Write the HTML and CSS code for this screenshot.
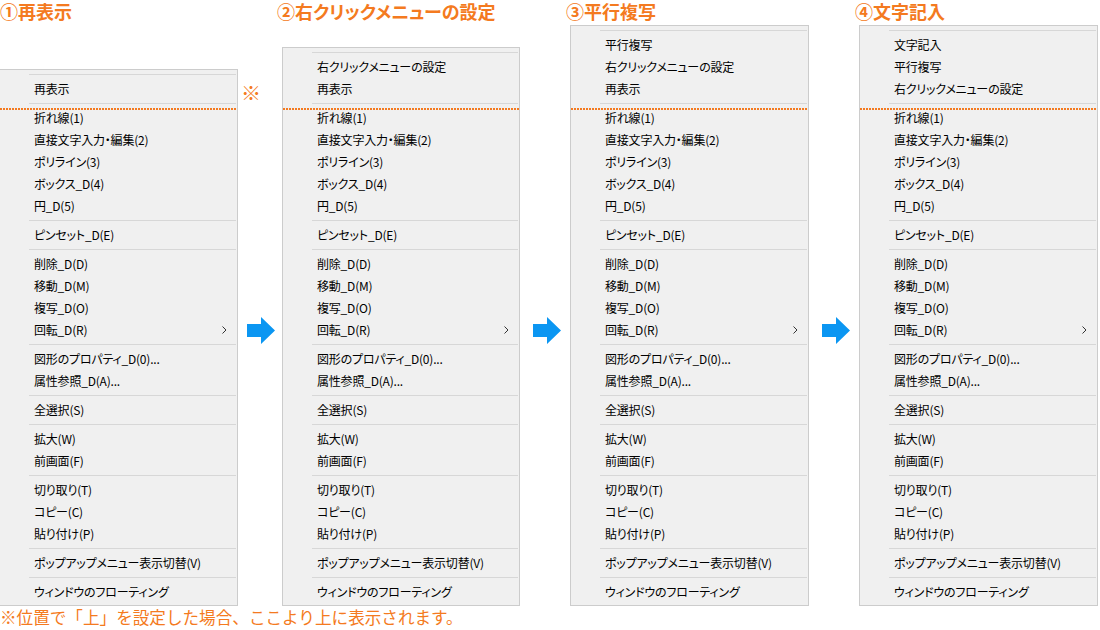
FILE: index.html
```html
<!DOCTYPE html>
<html lang="ja">
<head>
<meta charset="utf-8">
<title>右クリックメニュー</title>
<link rel="stylesheet" href="styles.css">
</head>
<body>
<div class="stage">
  <div class="col col1">
    <div class="title">①再表示</div>
    <div class="menu">
      <span class="mark">※</span>
      <div class="sep"></div>
      <div class="item">再表示</div>
      <div class="sep"></div>
      <div class="dots"></div>
      <div class="item">折れ線(1)</div>
      <div class="item">直接文字入力・編集(2)</div>
      <div class="item">ポリライン(3)</div>
      <div class="item">ボックス_D(4)</div>
      <div class="item">円_D(5)</div>
      <div class="sep"></div>
      <div class="item">ピンセット_D(E)</div>
      <div class="sep"></div>
      <div class="item">削除_D(D)</div>
      <div class="item">移動_D(M)</div>
      <div class="item">複写_D(O)</div>
      <div class="item">回転_D(R)<svg class="chev" width="5" height="8" viewBox="0 0 5 8"><polyline points="0.5,0.5 4,4 0.5,7.5" fill="none" stroke="#333" stroke-width="1"/></svg></div>
      <div class="sep"></div>
      <div class="item">図形のプロパティ_D(0)...</div>
      <div class="item">属性参照_D(A)...</div>
      <div class="sep"></div>
      <div class="item">全選択(S)</div>
      <div class="sep"></div>
      <div class="item">拡大(W)</div>
      <div class="item">前画面(F)</div>
      <div class="sep"></div>
      <div class="item">切り取り(T)</div>
      <div class="item">コピー(C)</div>
      <div class="item">貼り付け(P)</div>
      <div class="sep"></div>
      <div class="item">ポップアップメニュー表示切替(V)</div>
      <div class="sep"></div>
      <div class="item">ウィンドウのフローティング</div>
    </div>
  </div>

  <svg class="arrow arrow1" width="28" height="28" viewBox="0 0 28 28"><polygon points="0,7 14,7 14,0 28,13.5 14,27 14,20 0,20" fill="#0b96f2"/></svg>

  <div class="col col2">
    <div class="title">②右クリックメニューの設定</div>
    <div class="menu">
      <div class="sep"></div>
      <div class="item">右クリックメニューの設定</div>
      <div class="item">再表示</div>
      <div class="sep"></div>
      <div class="dots"></div>
      <div class="item">折れ線(1)</div>
      <div class="item">直接文字入力・編集(2)</div>
      <div class="item">ポリライン(3)</div>
      <div class="item">ボックス_D(4)</div>
      <div class="item">円_D(5)</div>
      <div class="sep"></div>
      <div class="item">ピンセット_D(E)</div>
      <div class="sep"></div>
      <div class="item">削除_D(D)</div>
      <div class="item">移動_D(M)</div>
      <div class="item">複写_D(O)</div>
      <div class="item">回転_D(R)<svg class="chev" width="5" height="8" viewBox="0 0 5 8"><polyline points="0.5,0.5 4,4 0.5,7.5" fill="none" stroke="#333" stroke-width="1"/></svg></div>
      <div class="sep"></div>
      <div class="item">図形のプロパティ_D(0)...</div>
      <div class="item">属性参照_D(A)...</div>
      <div class="sep"></div>
      <div class="item">全選択(S)</div>
      <div class="sep"></div>
      <div class="item">拡大(W)</div>
      <div class="item">前画面(F)</div>
      <div class="sep"></div>
      <div class="item">切り取り(T)</div>
      <div class="item">コピー(C)</div>
      <div class="item">貼り付け(P)</div>
      <div class="sep"></div>
      <div class="item">ポップアップメニュー表示切替(V)</div>
      <div class="sep"></div>
      <div class="item">ウィンドウのフローティング</div>
    </div>
  </div>

  <svg class="arrow arrow2" width="28" height="28" viewBox="0 0 28 28"><polygon points="0,7 14,7 14,0 28,13.5 14,27 14,20 0,20" fill="#0b96f2"/></svg>

  <div class="col col3">
    <div class="title">③平行複写</div>
    <div class="menu">
      <div class="sep"></div>
      <div class="item">平行複写</div>
      <div class="item">右クリックメニューの設定</div>
      <div class="item">再表示</div>
      <div class="sep"></div>
      <div class="dots"></div>
      <div class="item">折れ線(1)</div>
      <div class="item">直接文字入力・編集(2)</div>
      <div class="item">ポリライン(3)</div>
      <div class="item">ボックス_D(4)</div>
      <div class="item">円_D(5)</div>
      <div class="sep"></div>
      <div class="item">ピンセット_D(E)</div>
      <div class="sep"></div>
      <div class="item">削除_D(D)</div>
      <div class="item">移動_D(M)</div>
      <div class="item">複写_D(O)</div>
      <div class="item">回転_D(R)<svg class="chev" width="5" height="8" viewBox="0 0 5 8"><polyline points="0.5,0.5 4,4 0.5,7.5" fill="none" stroke="#333" stroke-width="1"/></svg></div>
      <div class="sep"></div>
      <div class="item">図形のプロパティ_D(0)...</div>
      <div class="item">属性参照_D(A)...</div>
      <div class="sep"></div>
      <div class="item">全選択(S)</div>
      <div class="sep"></div>
      <div class="item">拡大(W)</div>
      <div class="item">前画面(F)</div>
      <div class="sep"></div>
      <div class="item">切り取り(T)</div>
      <div class="item">コピー(C)</div>
      <div class="item">貼り付け(P)</div>
      <div class="sep"></div>
      <div class="item">ポップアップメニュー表示切替(V)</div>
      <div class="sep"></div>
      <div class="item">ウィンドウのフローティング</div>
    </div>
  </div>

  <svg class="arrow arrow3" width="28" height="28" viewBox="0 0 28 28"><polygon points="0,7 14,7 14,0 28,13.5 14,27 14,20 0,20" fill="#0b96f2"/></svg>

  <div class="col col4">
    <div class="title">④文字記入</div>
    <div class="menu">
      <div class="sep"></div>
      <div class="item">文字記入</div>
      <div class="item">平行複写</div>
      <div class="item">右クリックメニューの設定</div>
      <div class="sep"></div>
      <div class="dots"></div>
      <div class="item">折れ線(1)</div>
      <div class="item">直接文字入力・編集(2)</div>
      <div class="item">ポリライン(3)</div>
      <div class="item">ボックス_D(4)</div>
      <div class="item">円_D(5)</div>
      <div class="sep"></div>
      <div class="item">ピンセット_D(E)</div>
      <div class="sep"></div>
      <div class="item">削除_D(D)</div>
      <div class="item">移動_D(M)</div>
      <div class="item">複写_D(O)</div>
      <div class="item">回転_D(R)<svg class="chev" width="5" height="8" viewBox="0 0 5 8"><polyline points="0.5,0.5 4,4 0.5,7.5" fill="none" stroke="#333" stroke-width="1"/></svg></div>
      <div class="sep"></div>
      <div class="item">図形のプロパティ_D(0)...</div>
      <div class="item">属性参照_D(A)...</div>
      <div class="sep"></div>
      <div class="item">全選択(S)</div>
      <div class="sep"></div>
      <div class="item">拡大(W)</div>
      <div class="item">前画面(F)</div>
      <div class="sep"></div>
      <div class="item">切り取り(T)</div>
      <div class="item">コピー(C)</div>
      <div class="item">貼り付け(P)</div>
      <div class="sep"></div>
      <div class="item">ポップアップメニュー表示切替(V)</div>
      <div class="sep"></div>
      <div class="item">ウィンドウのフローティング</div>
    </div>
  </div>
</div>
<div class="note">※位置で「上」を設定した場合、ここより上に表示されます。</div>
</body>
</html>
```

FILE: styles.css
```css
* { box-sizing: border-box; }

html, body {
  margin: 0;
  padding: 0;
  background: #ffffff;
  width: 1100px;
  height: 630px;
  overflow: hidden;
  font-family: "Noto Sans CJK JP", "Noto Sans", sans-serif;
  font-feature-settings: "palt";
}

.stage {
  display: flex;
  align-items: flex-start;
  height: 606px;
}

.col {
  display: flex;
  flex-direction: column;
  justify-content: space-between;
  height: 606px;
}

.col1 { width: 238px; }
.col2 { width: 243px; margin-left: 2px; }
.col3 { width: 243px; margin-left: 5px; }
.col4 { width: 243px; margin-left: 5px; }

.title {
  color: #f47a20;
  font-size: 18px;
  font-weight: 700;
  line-height: 23px;
  white-space: nowrap;
}

.menu {
  position: relative;
  width: 239px;
  background: #f0f0f0;
  border: 1px solid #cccccc;
  padding: 1px 0 2px 0;
}

.col1 .menu { margin-left: -1px; }
.col2 .menu { margin-left: 5px; width: 238px; }
.col3 .menu { margin-left: 4px; }
.col4 .menu { margin-left: 4px; }

.sep {
  height: 7px;
  padding-top: 3px;
  margin-left: 29px;
  margin-right: 1px;
}
.sep::before {
  content: "";
  display: block;
  height: 1px;
  background: #d7d7d7;
}

.item {
  display: flex;
  align-items: center;
  height: 22px;
  padding-left: 34px;
  padding-right: 10px;
  font-size: 12px;
  line-height: 22px;
  letter-spacing: -0.2px;
  color: #000000;
  white-space: nowrap;
}

.chev { margin-left: auto; }

.dots {
  height: 2px;
  margin-top: 1px;
  margin-bottom: -3px;
  position: relative;
  z-index: 1;
  background: repeating-linear-gradient(to right, #f47a20 0 2px, transparent 2px 3px);
}

.mark {
  position: absolute;
  left: 241px;
  top: 11px;
  color: #f47a20;
  font-size: 20px;
  font-weight: 700;
  line-height: 24px;
  font-feature-settings: normal;
}

.arrow {
  flex: none;
  margin-top: 317px;
}
.arrow1 { margin-left: 9px; }
.arrow2 { margin-left: 13px; }
.arrow3 { margin-left: 13px; }

.note {
  color: #f47a20;
  font-size: 16.6px;
  font-weight: 400;
  line-height: 22px;
  white-space: nowrap;
  font-feature-settings: normal;
}
```
